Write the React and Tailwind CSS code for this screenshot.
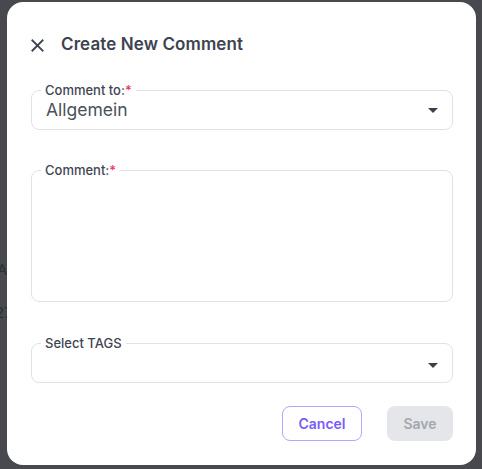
import React from 'react'

function Field({ label, required, children, className = '' }) {
  return (
    <fieldset className={`rounded-lg border border-[#e1e2e6] px-0 ${className}`}>
      <legend className="ml-[9px] px-1 text-[13px] leading-3 font-medium text-[#3f4552]">
        {label}
        {required && <span className="text-[#f0306a]">*</span>}
      </legend>
      {children}
    </fieldset>
  )
}

function DropArrow() {
  return (
    <svg viewBox="0 0 24 24" className="h-6 w-6 fill-[#3a404b]">
      <path d="M7 10l5 5 5-5z" />
    </svg>
  )
}

export default function App() {
  return (
    <div className="relative h-[469px] w-[482px] overflow-hidden bg-[#47494e] pl-[7px] pt-[2px] font-['Inter',sans-serif]">
      {/* page behind the overlay */}
      <div className="absolute left-[-3px] top-[259px] text-[15px] text-[#2c2f34]">Ar</div>
      <div className="absolute left-[-5px] top-[302px] text-[15px] text-[#2c2f34]">27</div>

      <div className="relative flex h-[463px] w-[469px] flex-col rounded-2xl bg-white pl-6 pr-[23px]">
        {/* Header */}
        <div className="mt-[33px] flex h-5 items-center gap-[17px]">
          <svg viewBox="0 0 14 14" className="h-[13px] w-[13px] stroke-[#3d4350]" strokeWidth="2" strokeLinecap="square">
            <path d="M1.5 1.5l11 11M12.5 1.5l-11 11" />
          </svg>
          <h2 className="text-[17px] tracking-[0.1px] font-semibold text-[#3d4350]">Create New Comment</h2>
        </div>

        {/* Comment to */}
        <Field label="Comment to:" required className="mt-[29px]">
          <div className="flex h-[33px] items-center justify-between pb-[5px] pl-[14px] pr-[7px]">
            <span className="text-[17.5px] text-[#4a505c]">Allgemein</span>
            <DropArrow />
          </div>
        </Field>

        {/* Comment */}
        <Field label="Comment:" required className="mt-[34px]">
          <div className="h-[125px]" />
        </Field>

        {/* Tags */}
        <Field label="Select TAGS" className="mt-[35px]">
          <div className="flex h-[33px] items-center justify-end pb-[1px] pr-[7px]">
            <DropArrow />
          </div>
        </Field>

        {/* Actions */}
        <div className="mt-[23px] flex justify-end gap-[25px]">
          <button className="h-[35px] w-[80px] rounded-lg border border-[#b9a4fb] text-sm font-semibold text-[#7b5cf6]">
            Cancel
          </button>
          <button className="h-[35px] w-[66px] rounded-lg bg-[#e4e6ea] text-sm font-semibold text-[#a3a7ae]">
            Save
          </button>
        </div>
      </div>
    </div>
  )
}
